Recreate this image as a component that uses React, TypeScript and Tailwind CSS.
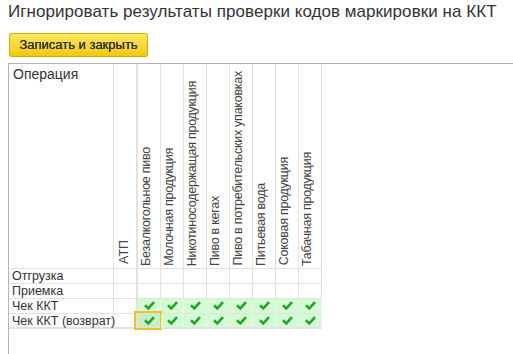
import React from "react";

const cols = [
  "Безалкогольное пиво",
  "Молочная продукция",
  "Никотиносодержащая продукция",
  "Пиво в кегах",
  "Пиво в потребительских упаковках",
  "Питьевая вода",
  "Соковая продукция",
  "Табачная продукция",
];

const rows = [
  { name: "Отгрузка", checked: false },
  { name: "Приемка", checked: false },
  { name: "Чек ККТ", checked: true },
  { name: "Чек ККТ (возврат)", checked: true },
];

function Check() {
  return (
    <svg width="11" height="9" viewBox="0 0 11 9">
      <path d="M1 4.2 L4.3 7.4 L10 1.2" fill="none" stroke="#22a62a" strokeWidth="2.6" />
    </svg>
  );
}

export default function App() {
  return (
    <div
      className="w-[513px] h-[354px] bg-white overflow-hidden text-[#333]"
      style={{ fontFamily: '"Liberation Sans", Arial, sans-serif' }}
    >
      <div className="pl-2 pt-[1px] text-[17px] leading-[22px] text-[#333] tracking-[0.05px]">
        Игнорировать результаты проверки кодов маркировки на ККТ
      </div>
      <div className="pl-[9px] mt-[9px]">
        <button className="h-[24px] w-[139px] rounded-[2px] border border-[#cfae0a] bg-gradient-to-b from-[#fde95a] to-[#f1c800] text-[13px] text-[#2f2f2f] font-normal [text-shadow:0_0_0.4px_#333]">
          Записать и закрыть
        </button>
      </div>
      <div className="ml-2 mt-[6px] h-[292px] border-t border-l border-[#b3b3b3]">
        <div className="grid grid-cols-[105px_24px_repeat(8,23px)] text-[12px]">
          {/* header */}
          <div className="h-[205px] border-r border-b border-[#e2e2e2] pl-[4px] pt-[3px] text-[14px] leading-[15px] text-[#333]">
            Операция
          </div>
          <div className="h-[205px] border-r-2 border-b border-[#e2e2e2] flex items-end pl-[3px] pb-[4px]">
            <span className="[writing-mode:vertical-rl] rotate-180 whitespace-nowrap text-[12.5px] leading-[14px] text-[#444]">
              АТП
            </span>
          </div>
          {cols.map((c) => (
            <div
              key={c}
              className="h-[205px] border-r border-b border-[#e2e2e2] flex items-end pl-[1px] pb-[2px] overflow-hidden"
            >
              <span className="[writing-mode:vertical-rl] rotate-180 whitespace-nowrap text-[12.5px] leading-[14px] tracking-[-0.25px] text-[#444]">
                {c}
              </span>
            </div>
          ))}
          {/* rows */}
          {rows.map((r, ri) => (
            <React.Fragment key={r.name}>
              <div
                className={`h-[15px] border-r border-b border-[#e2e2e2] pl-[3px] text-[12.5px] leading-[14px] text-[#333] whitespace-nowrap ${ri === 3 ? "border-b-2" : ""}`}
              >
                {r.name}
              </div>
              <div
                className={`h-[15px] border-r-2 border-b border-[#e2e2e2] ${ri === 3 ? "border-b-2" : ""}`}
              />
              {cols.map((c, ci) => {
                const sel = ri === 3 && ci === 0;
                return (
                  <div
                    key={c}
                    className={`relative h-[15px] border-r border-b flex items-center justify-center ${
                      r.checked ? "border-[#e8f8e8]" : "border-[#e2e2e2]"
                    } ${sel ? "bg-[#c9ecc9]" : r.checked ? "bg-[#d5fbd5]" : "bg-white"} ${
                      ri === 3 ? "border-b-2 border-b-[#e2e2e2]" : ""
                    } ${ri === 2 ? "border-b-[#e2e2e2]" : ""}`}
                  >
                    {r.checked && <Check />}
                    {sel && (
                      <div className="absolute -left-[4px] -right-[2px] -top-[3px] -bottom-[3px] border-2 border-[#f3c21a]" />
                    )}
                  </div>
                );
              })}
            </React.Fragment>
          ))}
        </div>
      </div>
    </div>
  );
}
